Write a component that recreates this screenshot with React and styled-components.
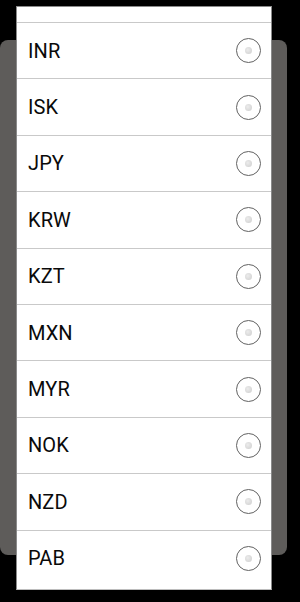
import React from "react";
import styled, { createGlobalStyle } from "styled-components";

const Global = createGlobalStyle`
  html, body { margin: 0; padding: 0; background: #000; }
  body { width: 300px; height: 602px; overflow: hidden; font-family: Roboto, "Noto Sans", sans-serif; }
`;

const Stage = styled.div`
  display: grid;
  width: 300px;
  height: 602px;
  background: #000;
`;

const BackPanel = styled.div`
  grid-area: 1 / 1;
  margin: 40px 0 0 0;
  width: 287px;
  height: 515px;
  border-radius: 8px;
  background: #5e5c5a;
`;

const Dialog = styled.div`
  grid-area: 1 / 1;
  margin: 6px 0 0 16px;
  width: 256px;
  height: 584px;
  box-sizing: border-box;
  background: #fff;
  border: 1px solid #8a8a8a;
  border-bottom-color: #bdbdbd;
  overflow: hidden;
  display: flex;
  flex-direction: column;
`;

const TopStub = styled.div`
  height: 15px;
  flex: none;
`;

const Row = styled.div`
  flex: none;
  height: 56.4px;
  box-sizing: border-box;
  border-top: 1px solid #c9c9c9;
  display: flex;
  align-items: center;
  justify-content: space-between;
  padding: 0 10px 0 11px;
`;

const Code = styled.span`
  font-family: Roboto, "Noto Sans", sans-serif;
  font-size: 20px;
  color: #0a0a0a;
  letter-spacing: 0.1px;
`;

const Radio = styled.span`
  width: 23px;
  height: 23px;
  border-radius: 50%;
  border: 1.5px solid #626262;
  display: flex;
  align-items: center;
  justify-content: center;
  background: #fff;
  &::after {
    content: "";
    width: 7px;
    height: 7px;
    border-radius: 50%;
    background: radial-gradient(circle at 40% 40%, #ececec, #cdcdcd);
  }
`;

const codes = ["INR", "ISK", "JPY", "KRW", "KZT", "MXN", "MYR", "NOK", "NZD", "PAB"];

export default function App() {
  return (
    <Stage>
      <Global />
      <BackPanel />
      <Dialog>
        <TopStub />
        {codes.map((c) => (
          <Row key={c}>
            <Code>{c}</Code>
            <Radio />
          </Row>
        ))}
      </Dialog>
    </Stage>
  );
}
